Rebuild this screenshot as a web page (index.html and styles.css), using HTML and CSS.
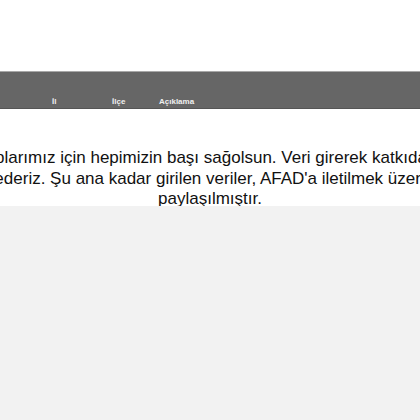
FILE: index.html
```html
<!DOCTYPE html>
<html lang="tr">
<head>
<meta charset="utf-8">
<link rel="stylesheet" href="styles.css">
</head>
<body>
<div class="top"></div>
<div class="thead">
  <span class="th th-il">İl</span>
  <span class="th th-ilce">İlçe</span>
  <span class="th th-desc">Açıklama</span>
</div>
<div class="notice">
  <p class="msg"><span class="line">Depremdeki, kayıplarımız için hepimizin başı sağolsun. Veri girerek katkıda bulunan herkese</span><span class="line">teşekkür ederiz. Şu ana kadar girilen veriler, AFAD'a iletilmek üzere ekiplere</span><span class="line">paylaşılmıştır.</span></p>
</div>
<div class="rest"></div>
</body>
</html>
```
FILE: styles.css
```css
html, body {
  margin: 0;
  padding: 0;
  height: 100%;
  overflow: hidden;
  background: #f2f2f2;
  font-family: "Liberation Sans", Arial, sans-serif;
}
body {
  display: flex;
  flex-direction: column;
}
.top {
  height: 71px;
  background: #ffffff;
  flex: none;
}
.thead {
  flex: none;
  height: 34px;
  background: #666666;
  border-top: 1px solid #a8a8a8;
  border-bottom: 1px solid #555555;
  display: flex;
  align-items: flex-end;
  padding-bottom: 2px;
  box-sizing: content-box;
}
.th {
  color: #f0f0f0;
  font-weight: bold;
  font-size: 8px;
  line-height: 9px;
}
.th-il { margin-left: 52px; width: 60px; }
.th-ilce { width: 47px; }
.notice {
  flex: none;
  background: #ffffff;
  display: flex;
  justify-content: center;
  padding-top: 39px;
  height: 58px;
  overflow: hidden;
}
.msg {
  margin: 0;
  flex: none;
  display: flex;
  flex-direction: column;
  align-items: center;
  font-size: 17px;
  line-height: 20.5px;
  color: #111;
}
.line {
  white-space: nowrap;
}
.rest {
  flex: 1;
  background: #f2f2f2;
}
```
